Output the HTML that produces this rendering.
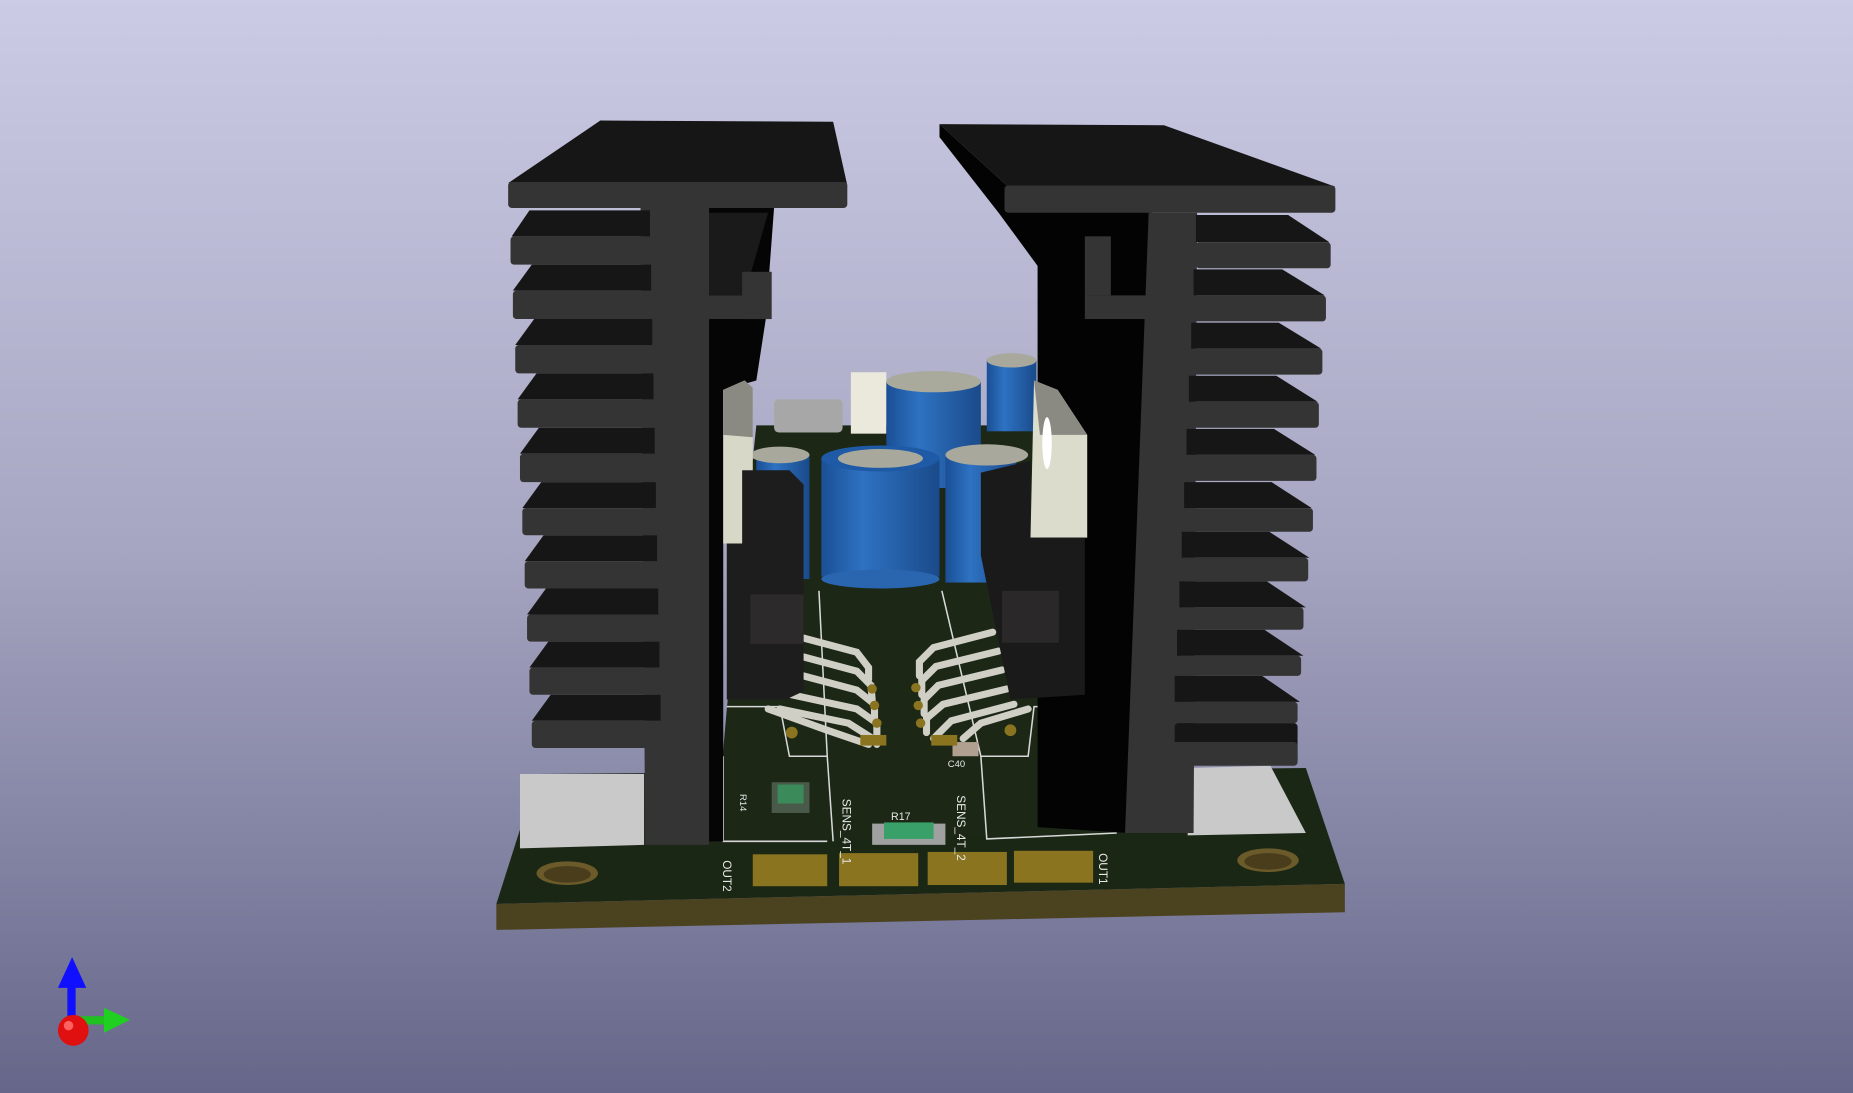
<!DOCTYPE html>
<html><head><meta charset="utf-8"><style>
html,body{margin:0;padding:0;width:1853px;height:1093px;overflow:hidden}
svg{display:block}
</style></head><body>
<svg width="1853" height="1093" viewBox="0 0 1568 925" preserveAspectRatio="none" xmlns="http://www.w3.org/2000/svg" font-family="Liberation Sans, sans-serif">
<defs>
<linearGradient id="bg" x1="0" y1="0" x2="0" y2="1"><stop offset="0" stop-color="#cbcbe5"/><stop offset="0.5" stop-color="#a6a6c2"/><stop offset="1" stop-color="#66668a"/></linearGradient>
<linearGradient id="cap" x1="0" y1="0" x2="1" y2="0"><stop offset="0" stop-color="#1a4f95"/><stop offset="0.35" stop-color="#2e72c2"/><stop offset="1" stop-color="#1a4a8a"/></linearGradient>
</defs>
<rect width="1568" height="925" fill="url(#bg)"/>
<polygon points="420,765 455,655 1105,650 1138,748" fill="#1b2715"/>
<polygon points="420,765 1138,748 1138,772 420,787" fill="#4b4220"/>
<polygon points="440,655 545,655 545,715 440,718" fill="#c9c9c9"/>
<polygon points="1005,650 1075,648 1105,705 1005,707" fill="#c9c9c9"/>
<polygon points="615,600 640,360 880,360 915,600 945,705 605,715" fill="#1c2716"/>
<ellipse cx="480" cy="739" rx="26" ry="10" fill="#6b5b2a"/><ellipse cx="480" cy="740" rx="20" ry="7" fill="#4a3d1c"/>
<ellipse cx="1073" cy="728" rx="26" ry="10" fill="#6b5b2a"/><ellipse cx="1073" cy="729" rx="20" ry="7" fill="#4a3d1c"/>
<g fill="#8a7420"><rect x="637" y="723" width="63" height="27"/><rect x="710" y="722" width="67" height="28"/><rect x="785" y="721" width="67" height="28"/><rect x="858" y="720" width="67" height="27"/></g>
<g stroke="#d8d8d8" stroke-width="1.3" fill="none">
<polyline points="615,598 660,598 668,640 700,640 705,712"/>
<polyline points="910,598 875,598 870,640 830,640 835,710 945,705"/>
<line x1="693" y1="500" x2="700" y2="640"/><line x1="797" y1="500" x2="830" y2="640"/>
<polyline points="612,640 612,712 700,712"/>
</g>
<g fill="#e8e8e8" font-size="10">
<text transform="translate(612,728) rotate(90)">OUT2</text>
<text transform="translate(930,722) rotate(90)">OUT1</text>
<text transform="translate(713,676) rotate(90)">SENS_4T_1</text>
<text transform="translate(810,673) rotate(90)">SENS_4T_2</text>
<text x="754" y="694" font-size="9">R17</text>
<text x="802" y="649" font-size="8">C40</text>
<text transform="translate(626,672) rotate(90)" font-size="8">R14</text>
</g>
<rect x="653" y="662" width="32" height="26" fill="#4a5a4a"/><rect x="658" y="664" width="22" height="16" fill="#3a8a5a"/>
<rect x="738" y="697" width="62" height="18" fill="#a0a0a0"/><rect x="748" y="696" width="42" height="14" fill="#3aa06a"/>
<rect x="806" y="628" width="22" height="12" fill="#b0a090"/>
<rect x="655" y="338" width="58" height="28" fill="#a7a7a7" rx="4"/>
<rect x="720" y="315" width="30" height="52" fill="#ebe9dc"/>
<g>
<rect x="835" y="305" width="42" height="60" fill="url(#cap)"/><ellipse cx="856" cy="305" rx="21" ry="6" fill="#a8a89c"/>
<rect x="750" y="323" width="80" height="90" fill="url(#cap)"/><ellipse cx="790" cy="323" rx="40" ry="9" fill="#a9a99c"/>
<rect x="640" y="385" width="45" height="105" fill="url(#cap)"/><ellipse cx="660" cy="385" rx="25" ry="7" fill="#a8a89c"/>
<rect x="800" y="385" width="60" height="108" fill="url(#cap)"/><ellipse cx="835" cy="385" rx="35" ry="9" fill="#a8a89c"/>
<rect x="695" y="388" width="100" height="100" fill="url(#cap)"/><ellipse cx="745" cy="490" rx="50" ry="8" fill="#2a66b0"/><ellipse cx="745" cy="388" rx="50" ry="11" fill="#1e5aa5"/><ellipse cx="745" cy="388" rx="36" ry="8" fill="#a8a89c"/>
</g>
<g stroke="#cfcfc6" stroke-width="6" fill="none" stroke-linecap="round">
<polyline points="680,540 725,552 735,565 735,575"/>
<polyline points="680,556 725,568 737,580 738,592"/>
<polyline points="680,572 725,584 740,596 740,608"/>
<polyline points="670,588 725,600 742,612 742,622"/>
<polyline points="660,600 718,612 740,626 742,630"/>
<polyline points="650,600 700,618 735,630"/>
<polyline points="840,535 790,548 778,560 778,572"/>
<polyline points="845,551 792,564 780,576 780,588"/>
<polyline points="848,567 794,580 782,592 782,604"/>
<polyline points="852,583 798,596 784,608 784,620"/>
<polyline points="858,596 805,610 790,625"/>
<polyline points="870,600 830,612 815,625"/>
</g>
<g fill="#8a7420"><circle cx="738" cy="583" r="4"/><circle cx="740" cy="597" r="4"/><circle cx="742" cy="612" r="4"/><circle cx="775" cy="582" r="4"/><circle cx="777" cy="597" r="4"/><circle cx="779" cy="612" r="4"/><rect x="728" y="622" width="22" height="9"/><rect x="788" y="622" width="22" height="9"/><circle cx="670" cy="620" r="5"/><circle cx="855" cy="618" r="5"/></g>
<!-- LEFT HEATSINK -->
<polygon points="598,176 655,176 648,270 640,322 612,330 612,712 598,712" fill="#050505"/>
<polygon points="600,180 650,180 630,250 600,250" fill="#1a1a1a"/>
<polygon points="430,155 508,102 705,103 717,157" fill="#161616"/>
<rect x="430" y="154" width="287" height="22" rx="3" fill="#343434"/>
<polygon points="542,176 600,176 600,715 546,715" fill="#343434"/>
<rect x="628" y="230" width="25" height="40" fill="#343434"/>
<rect x="592" y="250" width="60" height="20" fill="#343434"/>
<g fill="#161616">
<polygon points="448,178 550,178 550,200 433,200"/>
<polygon points="450,224 551,224 551,246 434,246"/>
<polygon points="452,270 552,270 552,292 436,292"/>
<polygon points="454,316 553,316 553,338 438,338"/>
<polygon points="456,362 554,362 554,384 440,384"/>
<polygon points="458,408 555,408 555,430 442,430"/>
<polygon points="460,453 556,453 556,475 444,475"/>
<polygon points="462,498 557,498 557,520 446,520"/>
<polygon points="464,543 558,543 558,565 448,565"/>
<polygon points="466,588 559,588 559,610 450,610"/>
</g>
<g fill="#343434">
<rect x="432" y="200" width="118" height="24" rx="3"/>
<rect x="434" y="246" width="118" height="24" rx="3"/>
<rect x="436" y="292" width="118" height="24" rx="3"/>
<rect x="438" y="338" width="118" height="24" rx="3"/>
<rect x="440" y="384" width="118" height="24" rx="3"/>
<rect x="442" y="430" width="118" height="23" rx="3"/>
<rect x="444" y="475" width="118" height="23" rx="3"/>
<rect x="446" y="520" width="118" height="23" rx="3"/>
<rect x="448" y="565" width="118" height="23" rx="3"/>
<rect x="450" y="610" width="118" height="23" rx="3"/>
</g>
<polygon points="612,330 630,322 637,328 637,460 612,460" fill="#d8d8c8"/>
<polygon points="612,330 630,322 637,328 637,370 612,368" fill="#8a8a82"/>
<polygon points="628,398 668,398 680,410 680,585 665,592 615,592 615,460 628,460" fill="#1d1d1d"/>
<rect x="635" y="503" width="45" height="42" fill="#2c2a2a"/>
<!-- RIGHT HEATSINK -->
<polygon points="795,105 795,116 845,180 878,225 878,700 955,705 975,180 852,157" fill="#030303"/>
<polygon points="795,105 985,106 1130,158 852,157" fill="#161616"/>
<rect x="850" y="157" width="280" height="23" rx="3" fill="#343434"/>
<polygon points="972,180 1013,180 1010,705 952,705" fill="#343434"/>
<rect x="918" y="200" width="22" height="50" fill="#343434"/>
<rect x="918" y="250" width="55" height="20" fill="#343434"/>
<g fill="#161616">
<polygon points="1012,182 1090,182 1125,205 1012,205"/>
<polygon points="1010,228 1085,228 1121,250 1010,250"/>
<polygon points="1008,273 1082,273 1118,295 1008,295"/>
<polygon points="1006,318 1080,318 1115,340 1006,340"/>
<polygon points="1004,363 1078,363 1113,385 1004,385"/>
<polygon points="1002,408 1076,408 1110,430 1002,430"/>
<polygon points="1000,450 1074,450 1108,472 1000,472"/>
<polygon points="998,492 1072,492 1105,514 998,514"/>
<polygon points="996,533 1070,533 1103,555 996,555"/>
<polygon points="994,572 1068,572 1100,594 994,594"/>
</g>
<g fill="#343434">
<rect x="1012" y="205" width="114" height="22" rx="3"/>
<rect x="1010" y="250" width="112" height="22" rx="3"/>
<rect x="1008" y="295" width="111" height="22" rx="3"/>
<rect x="1006" y="340" width="110" height="22" rx="3"/>
<rect x="1004" y="385" width="110" height="22" rx="3"/>
<rect x="1002" y="430" width="109" height="20" rx="3"/>
<rect x="1000" y="472" width="107" height="20" rx="3"/>
<rect x="998" y="514" width="105" height="19" rx="3"/>
<rect x="996" y="555" width="105" height="17" rx="3"/>
<rect x="994" y="594" width="104" height="18" rx="3"/>
<rect x="994" y="612" width="104" height="34" rx="3" fill="#161616"/>
<rect x="990" y="628" width="108" height="20" rx="3"/>
</g>
<polygon points="875,322 895,330 920,368 920,455 872,455" fill="#dcdccc"/>
<polygon points="875,322 895,330 920,368 880,368" fill="#8a8a82"/>
<polygon points="830,400 872,390 872,455 918,455 918,588 855,592 830,470" fill="#1a1a1a"/>
<ellipse cx="886" cy="375" rx="4" ry="22" fill="#ffffff"/>
<rect x="848" y="500" width="48" height="44" fill="#2a2828"/>
<rect x="57" y="832" width="7" height="32" fill="#1010ff"/>
<polygon points="49,836 61,810 73,836" fill="#1010ff"/>
<rect x="64" y="860" width="28" height="7" fill="#20c020"/>
<polygon points="88,853 110,863 88,874" fill="#20d020"/>
<circle cx="62" cy="872" r="13" fill="#e01010"/>
<circle cx="58" cy="868" r="4" fill="#ff6060"/>
</svg>
</body></html>
